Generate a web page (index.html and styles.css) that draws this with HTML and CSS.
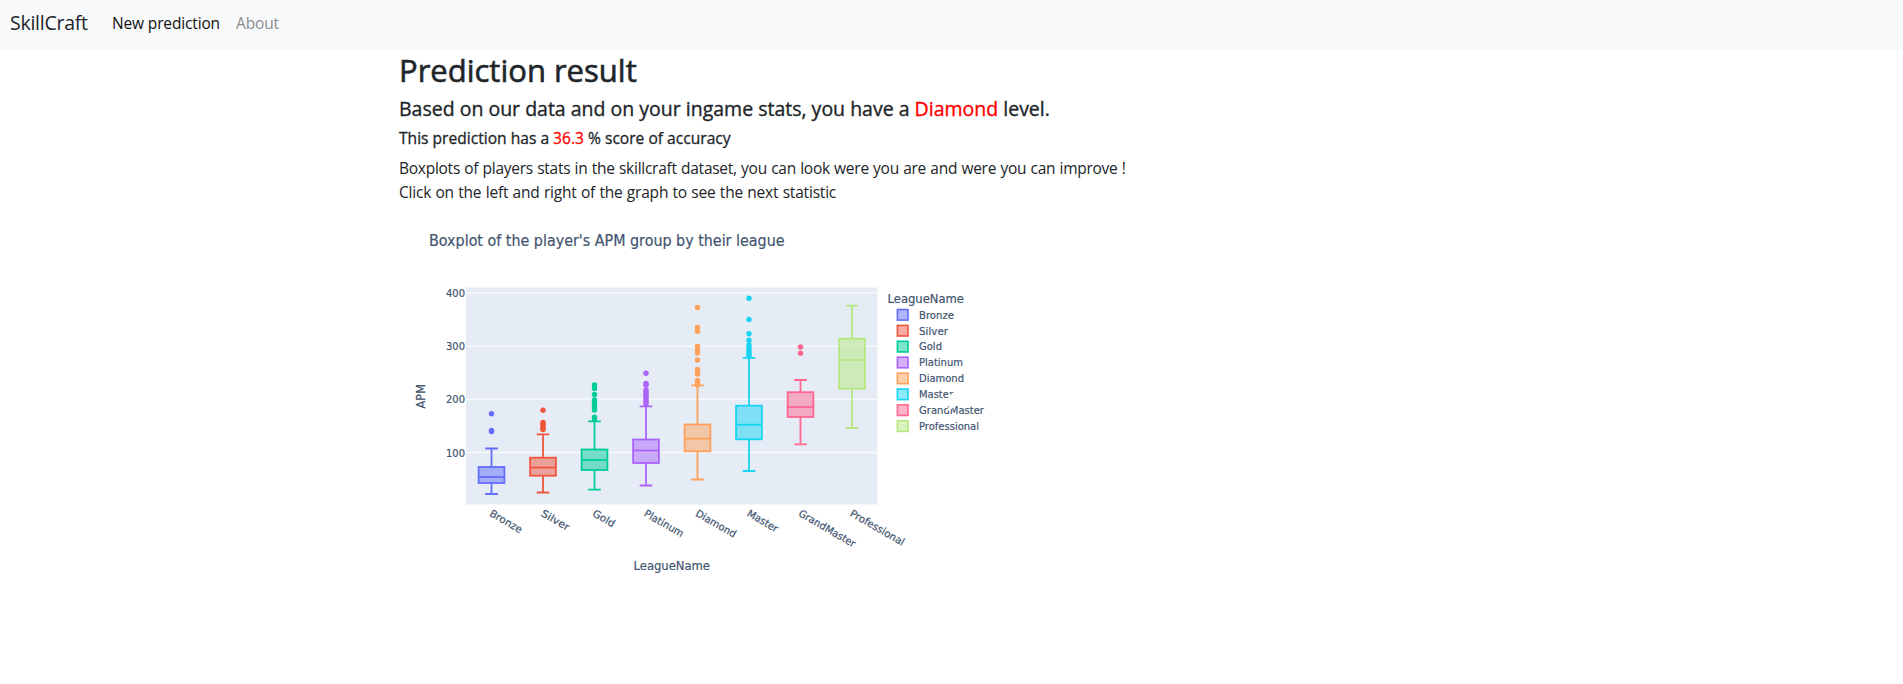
FILE: index.html
```html
<!DOCTYPE html>
<html lang="en">
<head>
<meta charset="utf-8">
<title>SkillCraft</title>
<link rel="stylesheet" href="styles.css">
</head>
<body>
<nav class="navbar">
  <a class="brand">SkillCraft</a>
  <a class="nav-link active">New prediction</a>
  <a class="nav-link about">About</a>
</nav>
<main class="container">
  <h2 class="title"><span>Prediction result</span></h2>
  <h5 class="lead"><span>Based on our data and on your ingame stats, you have a <em class="hot">Diamond</em> level.</span></h5>
  <h6 class="accuracy"><span>This prediction has a <em class="hot">36.3</em> % score of accuracy</span></h6>
  <p class="text"><span class="line one">Boxplots of players stats in the skillcraft dataset, you can look were you are and were you can improve !</span><br><span class="line two">Click on the left and right of the graph to see the next statistic</span></p>
  <svg class="chart" id="chart" viewBox="399 210 700 390" width="700" height="390"></svg>
</main>
<script src="chart.js"></script>
</body>
</html>
```
FILE: styles.css
```css
* { box-sizing: border-box; }
body { margin: 0; background: #fff; color: #212529; font-family: "Segoe UI", "Open Sans", "Noto Sans", sans-serif; font-size: 16px; line-height: 24px; }
.navbar { display: flex; align-items: center; height: 50px; padding: 0 10px 5px; background: #f8f9fb; white-space: nowrap; }
.brand { width: 102px; font-size: 19.5px; font-weight: 400; letter-spacing: -0.25px; }
.nav-link { width: 124px; font-size: 15.5px; letter-spacing: -0.15px; color: #111; }
.about { width: auto; color: #8c8d8e; }
.container { width: 1140px; margin-left: 399px; white-space: nowrap; }
.title, .lead, .accuracy, .text { margin: 0; }
.title { height: 46px; font-size: 31px; line-height: 40px; font-weight: 500; -webkit-text-stroke: 0.6px; }
.lead { height: 32px; font-size: 19.5px; line-height: 25px; font-weight: 500; -webkit-text-stroke: 0.35px; }
.accuracy { height: 28px; font-size: 15.6px; line-height: 21px; font-weight: 500; -webkit-text-stroke: 0.3px; }
.hot { font-style: normal; color: #f00; }
.text { height: 54px; font-size: 15.5px; word-spacing: 0.5px; }
.one { letter-spacing: -0.26px; }
.two { letter-spacing: -0.2px; }
.chart { display: block; overflow: hidden; }
.chart text { font-family: "DejaVu Sans", Verdana, sans-serif; fill: #42546f; stroke: #42546f; stroke-width: 0.2px; }
```
FILE: chart.js
```js
const leagues = [
  { name: 'Bronze', color: '#636efa', x: 491.5, low: 494, q1: 483, med: 477, q3: 467, high: 448.5, dots: [413.7, 430.5, 431.5], tick: 36, legend: 35 },
  { name: 'Silver', color: '#ef553b', x: 543, low: 492.5, q1: 475.7, med: 467.5, q3: 457.7, high: 434.3, dots: [410.3, 422.5, 424, 426, 428, 429.5], tick: 31, legend: 29 },
  { name: 'Gold', color: '#00cc96', x: 594.5, low: 489.7, q1: 470, med: 460, q3: 449.5, high: 421.3, dots: [385, 388.5, 394.5, 400, 402, 404, 406, 408, 410, 417.3, 419], tick: 24, legend: 23 },
  { name: 'Platinum', color: '#ab63fa', x: 646, low: 485.5, q1: 463, med: 450.5, q3: 439.5, high: 406.3, dots: [373.2, 383.5, 385, 390, 392, 394, 396, 398, 400, 402, 404], tick: 44, legend: 44 },
  { name: 'Diamond', color: '#ffa15a', x: 697.5, low: 479.5, q1: 451.3, med: 438.6, q3: 424.5, high: 385.3, dots: [307.5, 327.5, 331.3, 346.5, 350, 353, 360, 369.5, 371.5, 374, 380.5, 383, 385], tick: 45, legend: 45 },
  { name: 'Master', color: '#19d3f3', x: 749, low: 471, q1: 439.3, med: 424.7, q3: 405.7, high: 357.8, dots: [298.3, 319.5, 333.7, 340.3, 345, 347, 350, 352, 354, 356], tick: 34, legend: 34 },
  { name: 'GrandMaster', color: '#ff6692', x: 800.5, low: 444.3, q1: 417, med: 407, q3: 392.2, high: 380, dots: [347, 353.3], tick: 64, legend: 65 },
  { name: 'Professional', color: '#b6e880', x: 852, low: 428, q1: 388.7, med: 360, q3: 338.7, high: 305.7, dots: [], tick: 61, legend: 60 }
];
const label = (x, y, size, len, s, extra = '') =>
  `<text x="${x}" y="${y}" font-size="${size}" textLength="${len}" lengthAdjust="spacingAndGlyphs" ${extra}>${s}</text>`;
let out = '<rect x="466" y="287.5" width="411.5" height="217" fill="#e5ecf6"/>';
[[400, 292.7], [300, 346], [200, 399.3], [100, 452.5]].forEach(([v, y]) => {
  out += `<path d="M466 ${y}H877.5" stroke="#f7f9fc" stroke-width="1.4"/>` + label(446, y + 4, 10.7, 19, v);
});
leagues.forEach((g, i) => {
  out += `<g stroke="${g.color}" stroke-width="1.8" fill="none">
    <path d="M${g.x} ${g.high}V${g.q3}M${g.x} ${g.q1}V${g.low}M${g.x - 6.3} ${g.high}h12.6M${g.x - 6.3} ${g.low}h12.6"/>
    <rect x="${g.x - 12.9}" y="${g.q3}" width="25.8" height="${g.q1 - g.q3}" fill="${g.color}" fill-opacity=".5"/>
    <path d="M${g.x - 12.9} ${g.med}h25.8"/></g>`;
  g.dots.forEach(y => { out += `<circle cx="${g.x}" cy="${y}" r="2.7" fill="${g.color}"/>`; });
  out += label(g.x - 2.8, 515.5, 10.3, g.tick, g.name, `transform="rotate(30 ${g.x - 2.8} 515.5)"`);
  const y = 314.8 + i * 15.9;
  out += `<rect x="897.4" y="${y - 5.3}" width="10.6" height="10.6" fill="${g.color}" fill-opacity=".5" stroke="${g.color}" stroke-width="1.6"/>`;
  out += label(919, y + 3.8, 10.4, g.legend, g.name);
});
out += label(429, 246, 15.3, 355.5, "Boxplot of the player's APM group by their league");
out += label(887.5, 302.5, 12, 76.5, 'LeagueName');
out += label(633.5, 570, 12, 76.5, 'LeagueName');
out += label(425, 408.5, 12, 24.5, 'APM', 'transform="rotate(-90 425 408.5)"');
// next arrow of the carousel, lying over the legend
out += '<path d="M948.5 394.5l7 7.5-7.5 8.5" stroke="#fff" stroke-width="3.4" fill="none"/>';
document.getElementById('chart').innerHTML = out;
```
